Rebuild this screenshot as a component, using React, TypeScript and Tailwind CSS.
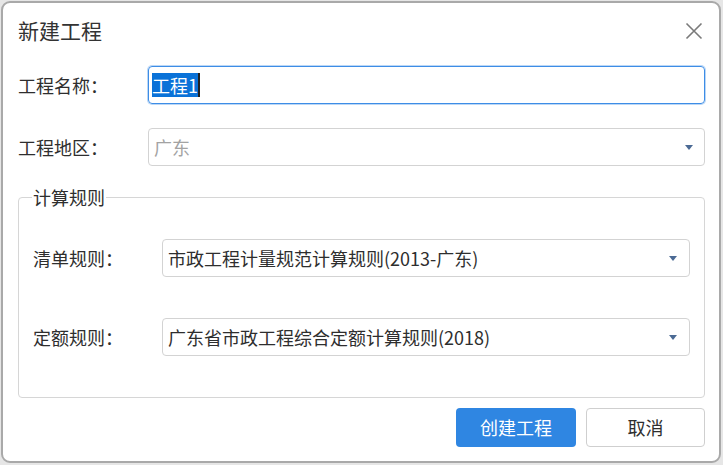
import React from 'react';

const Caret: React.FC = () => (
  <svg width="8" height="5" viewBox="0 0 8 5" className="shrink-0">
    <path d="M0 0 H8 L4 5 Z" fill="#4b6a94" />
  </svg>
);

interface SelectBoxProps {
  value: string;
  muted?: boolean;
  className?: string;
}

const SelectBox: React.FC<SelectBoxProps> = ({ value, muted, className }) => (
  <div
    className={`flex h-[38px] flex-1 items-center justify-between rounded-[4px] border border-[#d3d3d3] bg-white pl-[5px] pr-[11px] ${className ?? ''}`}
  >
    <span className={muted ? 'text-[#a3a3a3]' : 'text-[#2e2e2e]'}>{value}</span>
    <Caret />
  </div>
);

const App: React.FC = () => {
  return (
    <div className="h-[465px] w-[723px] overflow-hidden bg-[#e6e6e6] pl-[1px] pt-[1px] font-['Noto_Sans_CJK_SC','Liberation_Sans',sans-serif] text-[18px] text-[#2e2e2e]">
      <div className="flex h-[462px] w-[720px] flex-col rounded-[9px] border-2 border-[#a9a9a9] bg-white pl-[15px] pr-[14px]">
        {/* header */}
        <div className="flex h-[56px] items-center justify-between">
          <span className="text-[21px] text-[#333333]">新建工程</span>
          <svg width="18" height="18" viewBox="0 0 18 18" className="mr-[2px]">
            <path d="M1.5 1.5 L16.5 16.5 M16.5 1.5 L1.5 16.5" stroke="#7a7a7a" strokeWidth="1.6" />
          </svg>
        </div>

        {/* project name */}
        <div className="mt-[7px] flex items-center">
          <span className="w-[130px] shrink-0">工程名称：</span>
          <div className="flex h-[38px] flex-1 items-center rounded-[4px] border border-[#3d8de6] pl-[3px] shadow-[0_0_0_1px_rgba(61,141,230,0.35)]">
            <span className="bg-[#0a72d8] leading-[24px] text-white">工程1</span>
            <span className="h-[24px] w-[2px] bg-[#222222]" />
          </div>
        </div>

        {/* region */}
        <div className="mt-[24px] flex items-center">
          <span className="w-[130px] shrink-0">工程地区：</span>
          <SelectBox value="广东" muted />
        </div>

        {/* rules group */}
        <div className="relative mt-[31px] flex flex-col gap-[41px] rounded-[4px] border border-[#d6d6d6] px-[14px] pb-[41px] pt-[41px]">
          <span className="absolute left-[13px] top-[-13px] bg-white px-[1px] leading-[24px]">计算规则</span>
          <div className="flex items-center">
            <span className="w-[129px] shrink-0">清单规则：</span>
            <SelectBox value="市政工程计量规范计算规则(2013-广东)" className="pr-[12px]" />
          </div>
          <div className="flex items-center">
            <span className="w-[129px] shrink-0">定额规则：</span>
            <SelectBox value="广东省市政工程综合定额计算规则(2018)" className="pr-[12px]" />
          </div>
        </div>

        {/* footer */}
        <div className="mt-[10px] flex justify-end gap-[10px]">
          <button className="flex h-[39px] w-[120px] items-center justify-center rounded-[4px] bg-[#2f86e2] text-white">
            创建工程
          </button>
          <button className="flex h-[39px] w-[119px] items-center justify-center rounded-[4px] border border-[#cfcfcf] bg-white text-[#2e2e2e]">
            取消
          </button>
        </div>
      </div>
    </div>
  );
};

export default App;
